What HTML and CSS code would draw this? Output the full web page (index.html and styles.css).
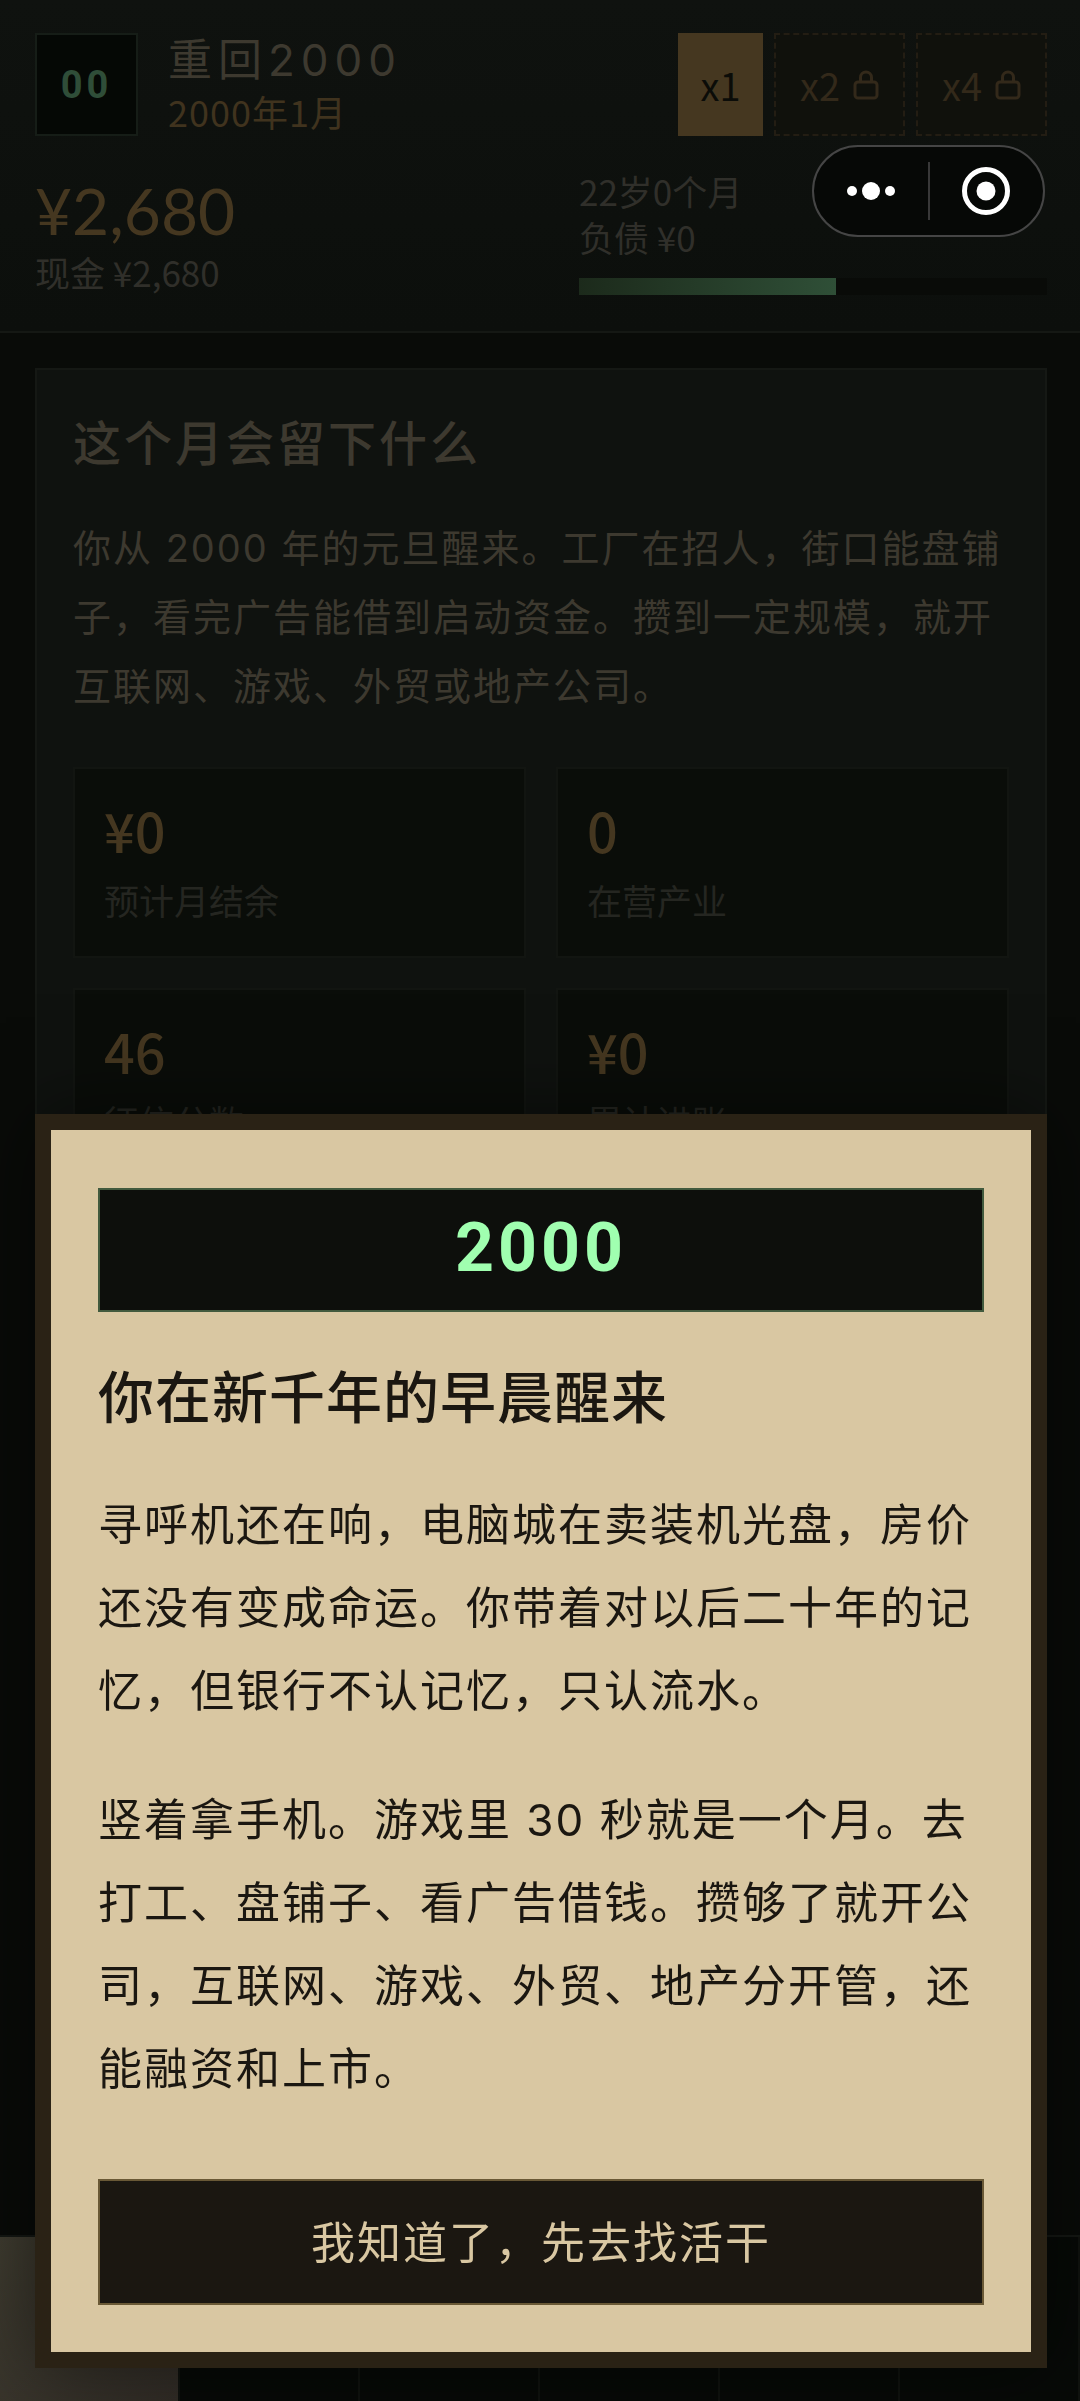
FILE: index.html
```
<!DOCTYPE html>
<html lang="zh-CN">
<head>
    <meta charset="UTF-8">
    <meta name="viewport" content="width=device-width, initial-scale=1.0">
    <title>重回2000</title>
    <link rel="stylesheet" href="styles.css">
</head>
<body>
    <div class="app">
        <!-- 顶部状态 -->
        <header class="header">
            <div class="header-row">
                <div class="logo">00</div>
                <div class="brand">
                    <h1 class="brand-name">重回2000</h1>
                    <p class="brand-date">2000年1月</p>
                </div>
                <div class="speed">
                    <button class="speed-btn active" type="button">x1</button>
                    <button class="speed-btn locked" type="button">x2
                        <svg class="lock" viewBox="0 0 26 30"><rect x="2" y="12" width="22" height="16" rx="3"/><path d="M7.500 12V7.500a5.500 5.500 0 0 1 11 0V12"/></svg>
                    </button>
                    <button class="speed-btn locked" type="button">x4
                        <svg class="lock" viewBox="0 0 26 30"><rect x="2" y="12" width="22" height="16" rx="3"/><path d="M7.500 12V7.500a5.500 5.500 0 0 1 11 0V12"/></svg>
                    </button>
                </div>
            </div>
            <div class="header-row wallet">
                <div class="money">
                    <p class="money-total">¥2,680</p>
                    <p class="meta">现金 ¥2,680</p>
                </div>
                <div class="status">
                    <p class="meta">22岁0个月</p>
                    <p class="meta">负债 ¥0</p>
                    <div class="progress"><div class="progress-fill" style="width: 55%"></div></div>
                </div>
            </div>
        </header>

        <!-- 月度面板 -->
        <main class="main">
            <section class="panel">
                <h2 class="panel-title">这个月会留下什么</h2>
                <p class="panel-text">你从 2000 年的元旦醒来。工厂在招人，街口能盘铺子，看完广告能借到启动资金。攒到一定规模，就开互联网、游戏、外贸或地产公司。</p>
                <div class="stats">
                    <div class="stat"><strong class="stat-value">¥0</strong><span class="stat-label">预计月结余</span></div>
                    <div class="stat"><strong class="stat-value">0</strong><span class="stat-label">在营产业</span></div>
                    <div class="stat"><strong class="stat-value">46</strong><span class="stat-label">征信分数</span></div>
                    <div class="stat"><strong class="stat-value">¥0</strong><span class="stat-label">累计进账</span></div>
                </div>
            </section>
        </main>

        <!-- 底部导航 -->
        <nav class="tabbar">
            <button class="tab active" type="button" aria-label="标签1"></button>
            <button class="tab" type="button" aria-label="标签2"></button>
            <button class="tab" type="button" aria-label="标签3"></button>
            <button class="tab" type="button" aria-label="标签4"></button>
            <button class="tab" type="button" aria-label="标签5"></button>
            <button class="tab" type="button" aria-label="标签6"></button>
        </nav>
    </div>

    <!-- 开场弹窗 -->
    <div class="overlay">
        <div class="modal" role="dialog" aria-modal="true" aria-labelledby="modalTitle">
            <div class="modal-year">2000</div>
            <h2 class="modal-title" id="modalTitle">你在新千年的早晨醒来</h2>
            <p class="modal-text">寻呼机还在响，电脑城在卖装机光盘，房价还没有变成命运。你带着对以后二十年的记忆，但银行不认记忆，只认流水。</p>
            <p class="modal-text">竖着拿手机。游戏里 30 秒就是一个月。去打工、盘铺子、看广告借钱。攒够了就开公司，互联网、游戏、外贸、地产分开管，还能融资和上市。</p>
            <button class="modal-btn" type="button">我知道了，先去找活干</button>
        </div>
    </div>

    <!-- 小程序胶囊 -->
    <div class="capsule">
        <button class="capsule-btn" type="button" aria-label="更多">
            <svg width="50" height="50" viewBox="0 0 50 50"><circle cx="6" cy="25" r="5"/><circle cx="25" cy="25" r="9"/><circle cx="44" cy="25" r="5"/></svg>
        </button>
        <span class="capsule-line"></span>
        <button class="capsule-btn" type="button" aria-label="关闭">
            <svg width="50" height="50" viewBox="0 0 50 50"><circle cx="25" cy="25" r="21.500" fill="none" stroke="#fff" stroke-width="5"/><circle cx="25" cy="25" r="9.500"/></svg>
        </button>
    </div>
</body>
</html>
```
FILE: styles.css
```
:root {
    --bg: #090b08;
    --surface: #0f120f;
    --inset: #0a0d09;
    --line: #151814;
    --gold: #453720;
    --text: #3d392f;
    --muted: #302f2a;
    --paper: #d9c7a2;
    --ink: #1b1711;
}

* {
    margin: 0;
    padding: 0;
    box-sizing: border-box;
}

body {
    font-family: 'Noto Sans CJK SC', sans-serif;
    background-color: var(--bg);
    color: var(--text);
}

button {
    font-family: inherit;
    border: none;
    background: none;
    cursor: pointer;
}

.app {
    height: 100vh;
    display: flex;
    flex-direction: column;
    overflow: hidden;
}

.header {
    display: flex;
    flex-direction: column;
    gap: 32px;
    padding: 33px 33px 36px 35px;
    background: linear-gradient(#0f120f, #0c0f0c);
    border-bottom: 2px solid var(--line);
}

.header-row {
    display: flex;
}

.logo {
    width: 103px;
    height: 103px;
    display: flex;
    align-items: center;
    justify-content: center;
    background-color: #050805;
    border: 2px solid #161d17;
    color: #2f4d38;
    font-family: Roboto, sans-serif;
    font-size: 38px;
    font-weight: 700;
    letter-spacing: 4px;
}

.brand {
    flex: 1;
    padding-left: 30px;
}

.brand-name {
    font-family: Inter, 'Noto Sans CJK SC', sans-serif;
    font-size: 44px;
    font-weight: 400;
    line-height: 54px;
    letter-spacing: 6px;
}

.brand-date {
    color: #40331e;
    font-size: 36px;
    line-height: 49px;
    letter-spacing: 1px;
}

.speed {
    display: flex;
    gap: 11px;
}

.speed-btn {
    width: 131px;
    display: flex;
    align-items: center;
    justify-content: center;
    gap: 13px;
    font-size: 38px;
    line-height: 48px;
    color: #33291a;
}

.speed-btn.active {
    width: 85px;
    background-color: var(--gold);
    color: #0b0c08;
}

.speed-btn.locked {
    background-color: #10110c;
    border: 2px dashed #231d13;
}

.lock {
    width: 26px;
    height: 30px;
    fill: none;
    stroke: currentColor;
    stroke-width: 3;
}

.wallet {
    justify-content: space-between;
}

.money-total {
    padding-top: 4px;
    color: var(--gold);
    font-family: Lato, sans-serif;
    font-size: 64px;
    line-height: 77px;
}

.meta {
    color: var(--muted);
    font-size: 35px;
    line-height: 46px;
}

.status {
    width: 468px;
}

.progress {
    height: 17px;
    margin-top: 18px;
    background-color: #090b08;
}

.progress-fill {
    height: 100%;
    background: linear-gradient(90deg, #1c2a1b, #2f4f37);
}

.main {
    flex: 1;
    min-height: 0;
    overflow: hidden;
    padding: 35px 33px 0 35px;
}

.panel {
    min-height: 100%;
    padding: 36px;
    background-color: var(--surface);
    border: 2px solid var(--line);
}

.panel-title {
    font-size: 48px;
    font-weight: 500;
    line-height: 69px;
    letter-spacing: 3px;
}

.panel-text {
    margin: 39px 0 46px;
    font-family: Inter, 'Noto Sans CJK SC', sans-serif;
    font-size: 38px;
    line-height: 69px;
    letter-spacing: 2px;
}

.stats {
    display: grid;
    grid-template-columns: 1fr 1fr;
    gap: 30px;
}

.stat {
    display: flex;
    flex-direction: column;
    gap: 13px;
    padding: 29px 29px 31px;
    background-color: var(--inset);
    border: 2px solid #121511;
}

.stat-value {
    color: var(--gold);
    font-size: 54px;
    font-weight: 500;
    line-height: 64px;
}

.stat-label {
    color: #252621;
    font-size: 35px;
    line-height: 50px;
}

.tabbar {
    height: 166px;
    display: flex;
    border-top: 2px solid var(--line);
    background-color: #070a07;
}

.tab {
    flex: 1;
    border-right: 2px solid #10130f;
}

.tab.active {
    background: linear-gradient(135deg, #3f3c30, #322d27);
}

.overlay {
    position: fixed;
    inset: 0;
    display: flex;
    align-items: flex-end;
    padding: 33px 33px 33px 35px;
}

.modal {
    width: 100%;
    padding: 58px 47px 47px;
    background-color: var(--paper);
    border: 16px solid #2a2215;
    box-shadow: 0 0 80px rgba(0, 0, 0, 0.5);
    color: var(--ink);
}

.modal-year {
    padding-bottom: 4px;
    border: 2px solid #425a3e;
    background-color: #0d0f0c;
    color: #a0ffb0;
    font-family: Roboto, sans-serif;
    font-size: 68px;
    font-weight: 700;
    line-height: 116px;
    letter-spacing: 4px;
    text-align: center;
}

.modal-title {
    margin: 44px 0 52px;
    font-size: 56px;
    font-weight: 500;
    line-height: 76px;
    letter-spacing: 1px;
}

.modal-text {
    margin-bottom: 46px;
    font-family: Inter, 'Noto Sans CJK SC', sans-serif;
    font-size: 44px;
    line-height: 83px;
    letter-spacing: 2px;
}

.modal-btn {
    width: 100%;
    height: 126px;
    margin-top: 22px;
    padding-bottom: 4px;
    background-color: var(--ink);
    border: 2px solid #6a5936;
    color: var(--paper);
    font-size: 44px;
    letter-spacing: 2px;
}

.capsule {
    position: fixed;
    top: 145px;
    right: 35px;
    width: 233px;
    height: 92px;
    display: flex;
    align-items: center;
    background-color: #060806;
    border: 2px solid #454545;
    border-radius: 46px;
}

.capsule-btn {
    flex: 1;
    display: flex;
    justify-content: center;
    fill: #fff;
}

.capsule-line {
    width: 2px;
    height: 58px;
    background-color: #383838;
}
```
